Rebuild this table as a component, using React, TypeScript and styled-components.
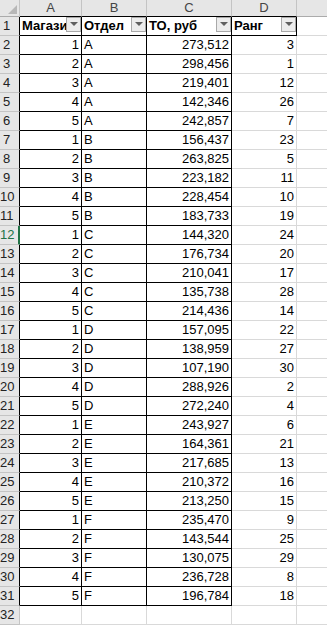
import React from "react";
import styled, { createGlobalStyle } from "styled-components";

const GlobalStyle = createGlobalStyle`
  html, body { margin: 0; padding: 0; background: #ffffff; overflow: hidden; }
  body { font-family: "Liberation Sans", Arial, sans-serif; }
`;

const GRID = "#d9d9d9";
const BLACK = "#000000";
const HEAD_BG = "#e6e6e6";
const HEAD_LINE = "#c4c4c4";
const GREEN = "#217346";

const Sheet = styled.div`
  display: grid;
  grid-template-columns: 20px 62px 65px 85px 65px 80px;
  grid-template-rows: 17px repeat(32, 19px);
  width: 327px;
  height: 625px;
  overflow: hidden;
  font-family: "Liberation Sans", Arial, sans-serif;
`;

const Corner = styled.div`
  position: relative;
  box-sizing: border-box;
  background: ${HEAD_BG};
  border-right: 1px solid ${HEAD_LINE};
  border-bottom: 1px solid #ababab;
`;

const CornerTriangle = styled.div`
  position: absolute;
  right: 2px;
  bottom: 2px;
  width: 0;
  height: 0;
  border-left: 9px solid transparent;
  border-bottom: 9px solid #b7b7b7;
`;

const ColHeader = styled.div<{ $bottom: string }>`
  box-sizing: border-box;
  background: ${HEAD_BG};
  border-right: 1px solid ${HEAD_LINE};
  border-bottom: 1px solid ${(p) => p.$bottom};
  color: #444444;
  font-size: 13px;
  line-height: 16px;
  text-align: center;
`;

const RowHeader = styled.div<{ $right: string; $selected?: boolean }>`
  box-sizing: border-box;
  background: ${HEAD_BG};
  border-bottom: 1px solid ${HEAD_LINE};
  border-right: ${(p) => (p.$selected ? `2px solid ${GREEN}` : `1px solid ${p.$right}`)};
  color: ${(p) => (p.$selected ? GREEN : "#222222")};
  font-size: 13px;
  line-height: 18px;
  text-align: center;
  padding-right: 6px;
  white-space: nowrap;
`;

const Cell = styled.div<{
  $right: string;
  $bottom: string;
  $align?: "left" | "right";
  $bold?: boolean;
}>`
  position: relative;
  box-sizing: border-box;
  overflow: hidden;
  white-space: nowrap;
  border-right: 1px solid ${(p) => p.$right};
  border-bottom: 1px solid ${(p) => p.$bottom};
  color: #000000;
  font-size: 13px;
  line-height: 18px;
  font-weight: ${(p) => (p.$bold ? 700 : 400)};
  text-align: ${(p) => p.$align ?? "left"};
  padding: ${(p) => (p.$align === "right" ? "0 2px 0 0" : "0 0 0 2px")};
`;

const FilterButton = styled.div`
  position: absolute;
  top: 0;
  right: 0;
  width: 15px;
  height: 15px;
  box-sizing: border-box;
  background: #ececec;
  border: 1px solid #a9a9a9;
  display: flex;
  align-items: center;
  justify-content: center;
`;

const FilterArrow = styled.div`
  width: 0;
  height: 0;
  margin-top: -1px;
  border-left: 4px solid transparent;
  border-right: 4px solid transparent;
  border-top: 4px solid #5f5f5f;
`;

type Row = [number, string, string, number];

const data: Row[] = [
  [1, "A", "273,512", 3],
  [2, "A", "298,456", 1],
  [3, "A", "219,401", 12],
  [4, "A", "142,346", 26],
  [5, "A", "242,857", 7],
  [1, "B", "156,437", 23],
  [2, "B", "263,825", 5],
  [3, "B", "223,182", 11],
  [4, "B", "228,454", 10],
  [5, "B", "183,733", 19],
  [1, "C", "144,320", 24],
  [2, "C", "176,734", 20],
  [3, "C", "210,041", 17],
  [4, "C", "135,738", 28],
  [5, "C", "214,436", 14],
  [1, "D", "157,095", 22],
  [2, "D", "138,959", 27],
  [3, "D", "107,190", 30],
  [4, "D", "288,926", 2],
  [5, "D", "272,240", 4],
  [1, "E", "243,927", 6],
  [2, "E", "164,361", 21],
  [3, "E", "217,685", 13],
  [4, "E", "210,372", 16],
  [5, "E", "213,250", 15],
  [1, "F", "235,470", 9],
  [2, "F", "143,544", 25],
  [3, "F", "130,075", 29],
  [4, "F", "236,728", 8],
  [5, "F", "196,784", 18],
];

const headers = ["Магазин", "Отдел", "ТО, руб", "Ранг"];

export default function App() {
  return (
    <>
      <GlobalStyle />
      <Sheet>
        <Corner>
          <CornerTriangle />
        </Corner>
        {["A", "B", "C", "D"].map((l) => (
          <ColHeader key={l} $bottom={BLACK}>
            {l}
          </ColHeader>
        ))}
        <ColHeader $bottom="#ababab" />

        <RowHeader $right={BLACK}>1</RowHeader>
        {headers.map((h) => (
          <Cell key={h} $right={BLACK} $bottom={BLACK} $bold>
            {h}
            <FilterButton>
              <FilterArrow />
            </FilterButton>
          </Cell>
        ))}
        <Cell $right={GRID} $bottom={GRID} />

        {data.map((r, i) => {
          const n = i + 2;
          return (
            <React.Fragment key={n}>
              <RowHeader $right={BLACK} $selected={n === 12}>
                {n}
              </RowHeader>
              <Cell $right={BLACK} $bottom={BLACK} $align="right">
                {r[0]}
              </Cell>
              <Cell $right={BLACK} $bottom={BLACK}>
                {r[1]}
              </Cell>
              <Cell $right={BLACK} $bottom={BLACK} $align="right">
                {r[2]}
              </Cell>
              <Cell $right={GRID} $bottom={GRID} $align="right">
                {r[3]}
              </Cell>
              <Cell $right={GRID} $bottom={GRID} />
            </React.Fragment>
          );
        })}

        <RowHeader $right={HEAD_LINE}>32</RowHeader>
        <Cell $right={GRID} $bottom={GRID} />
        <Cell $right={GRID} $bottom={GRID} />
        <Cell $right={GRID} $bottom={GRID} />
        <Cell $right={GRID} $bottom={GRID} />
        <Cell $right={GRID} $bottom={GRID} />
      </Sheet>
    </>
  );
}
